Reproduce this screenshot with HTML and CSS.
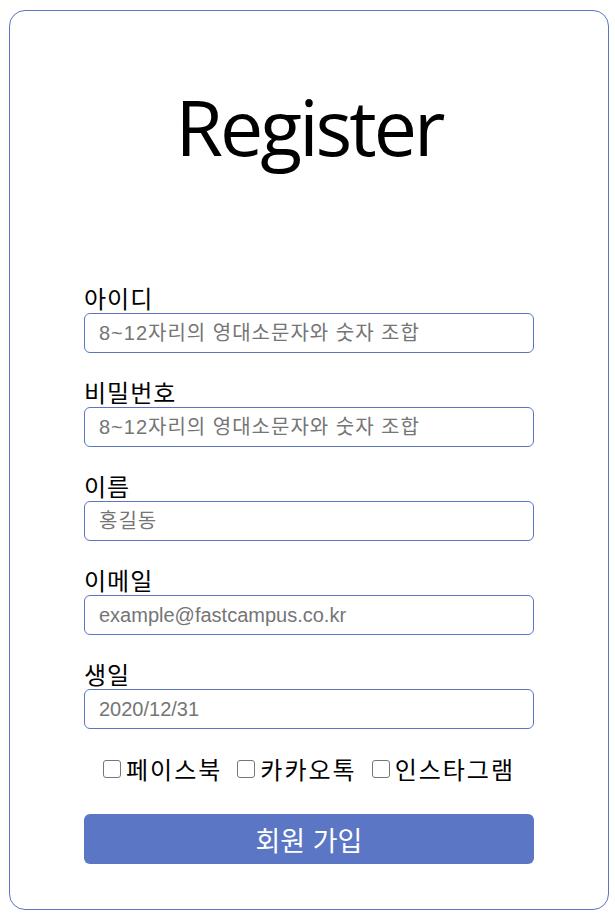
FILE: index.html
```html
<!DOCTYPE html>
<html lang="ko">
<head>
    <meta charset="UTF-8">
    <meta name="viewport" content="width=device-width, initial-scale=1.0">
    <title>Register</title>
    <link rel="stylesheet" href="styles.css">
</head>
<body>
    <div class="container">
        <h1>Register</h1>
        <form class="register-form" onsubmit="return false;">
            <div class="field">
                <label for="userId">아이디</label>
                <input type="text" id="userId" class="ko-hint" placeholder="8~12자리의 영대소문자와 숫자 조합">
            </div>
            <div class="field">
                <label for="password">비밀번호</label>
                <input type="password" id="password" class="ko-hint" placeholder="8~12자리의 영대소문자와 숫자 조합">
            </div>
            <div class="field">
                <label for="name">이름</label>
                <input type="text" id="name" class="ko-hint" placeholder="홍길동">
            </div>
            <div class="field">
                <label for="email">이메일</label>
                <input type="email" id="email" placeholder="example@fastcampus.co.kr">
            </div>
            <div class="field">
                <label for="birth">생일</label>
                <input type="text" id="birth" placeholder="2020/12/31">
            </div>

            <div class="sns">
                <label><input type="checkbox">페이스북</label>
                <label><input type="checkbox">카카오톡</label>
                <label><input type="checkbox">인스타그램</label>
            </div>

            <button type="submit" class="button">회원 가입</button>
        </form>
    </div>
</body>
</html>
```
FILE: styles.css
```css
body {
    font-family: "Noto Sans CJK KR", "Liberation Sans", sans-serif;
    margin: 0;
    padding: 0;
    background-color: white;
}

.container {
    box-sizing: border-box;
    width: 600px;
    height: 900px;
    margin: 10px 0 0 9px;
    border: 1px solid #5b75c4;
    border-radius: 16px;
}

h1 {
    font-family: "Open Sans", sans-serif;
    font-weight: normal;
    font-size: 77px;
    letter-spacing: -3px;
    line-height: 110px;
    text-align: center;
    margin: 61px 0 103px;
}

.register-form {
    width: 450px;
    margin: 0 auto;
}

.field {
    margin-bottom: 26px;
}

.field label {
    display: block;
    font-size: 24px;
    line-height: 26px;
    letter-spacing: 1px;
    margin-bottom: 2px;
    color: black;
}

.field input {
    box-sizing: border-box;
    width: 100%;
    height: 40px;
    padding: 0 14px;
    border: 1px solid #5b75c4;
    border-radius: 6px;
    font-family: "Liberation Sans", "Noto Sans CJK KR", sans-serif;
    font-size: 20px;
    outline: none;
}

.field input::placeholder {
    color: #757575;
}

.field input.ko-hint::placeholder {
    letter-spacing: 1px;
}

.sns {
    display: flex;
    justify-content: center;
    gap: 15px;
    margin-top: 23px;
    font-size: 24px;
    line-height: 28px;
    letter-spacing: 2px;
}

.sns label {
    display: flex;
    align-items: center;
}

.sns input {
    appearance: none;
    flex-shrink: 0;
    box-sizing: border-box;
    width: 18px;
    height: 18px;
    margin: 0 5px 0 0;
    border: 1px solid #767676;
    border-radius: 3px;
    background-color: white;
}

.sns input:checked {
    background-color: #5b76c4;
    border-color: #5b76c4;
}

.button {
    display: block;
    width: 100%;
    height: 50px;
    margin-top: 31px;
    background-color: #5b76c4;
    color: white;
    border: none;
    border-radius: 6px;
    font-family: "Noto Sans CJK KR", sans-serif;
    font-size: 27px;
    cursor: pointer;
}
```
